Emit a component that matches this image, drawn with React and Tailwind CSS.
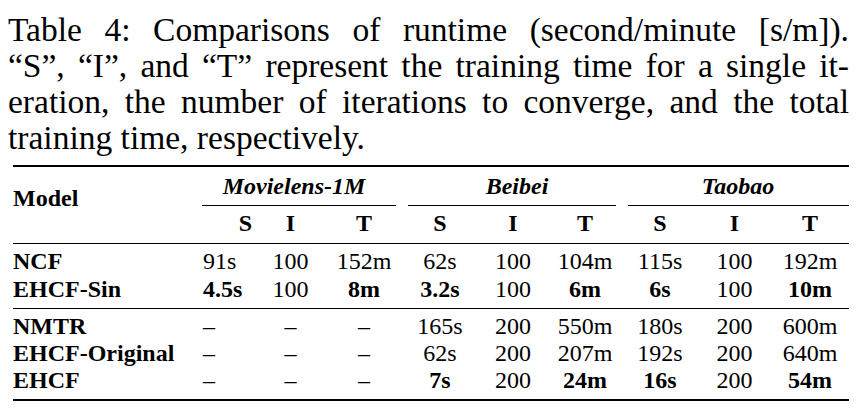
import React from 'react';

const cols = 'grid grid-cols-[69px_71px_76px_76px_70px_74px_76px_73px_78px]';

const groupOne = [
  { model: 'NCF', cells: [['91s'], ['100'], ['152m'], ['62s'], ['100'], ['104m'], ['115s'], ['100'], ['192m']] },
  { model: 'EHCF-Sin', cells: [['4.5s', 1], ['100'], ['8m', 1], ['3.2s', 1], ['100'], ['6m', 1], ['6s', 1], ['100'], ['10m', 1]] },
];

const groupTwo = [
  { model: 'NMTR', cells: [['–'], ['–'], ['–'], ['165s'], ['200'], ['550m'], ['180s'], ['200'], ['600m']] },
  { model: 'EHCF-Original', cells: [['–'], ['–'], ['–'], ['62s'], ['200'], ['207m'], ['192s'], ['200'], ['640m']] },
  { model: 'EHCF', cells: [['–'], ['–'], ['–'], ['7s', 1], ['200'], ['24m', 1], ['16s', 1], ['200'], ['54m', 1]] },
];

function Row({ row, height }) {
  return (
    <div className={`flex ${height}`}>
      <div className="w-[173px] font-bold">{row.model}</div>
      <div className={cols}>
        {row.cells.map(([v, b], i) => (
          <div
            key={i}
            className={`${i === 0 ? 'text-left pl-[17px]' : 'text-center'} ${b ? 'font-bold' : ''}`}
          >
            {v}
          </div>
        ))}
      </div>
    </div>
  );
}

export default function App() {
  return (
    <div className="w-[862px] h-[408px] bg-white text-black font-['Liberation_Serif','Times_New_Roman',serif] overflow-hidden">
      {/* Caption */}
      <div className="pl-[8px] pr-[13px] pt-[12px] text-[33.5px] leading-[36px]">
        <div className="text-justify [text-align-last:justify]">
          Table 4: Comparisons of runtime (second/minute [s/m]).
        </div>
        <div className="text-justify [text-align-last:justify]">
          “S”, “I”, and “T” represent the training time for a single it-
        </div>
        <div className="text-justify [text-align-last:justify]">
          eration, the number of iterations to converge, and the total
        </div>
        <div>training time, respectively.</div>
      </div>

      {/* Table */}
      <div className="ml-[13px] w-[836px] mt-[9px] text-[24px]">
        <div className="flex border-t-2 border-b border-black">
          <div className="w-[173px] pt-[18px] font-bold leading-[27px]">Model</div>
          <div className="pt-[6px] pb-[6px]">
            <div className="grid grid-cols-[216px_220px_227px] font-bold italic leading-[27px]">
              <div>
                <div className="text-center">Movielens-1M</div>
                <div className="mt-[5px] h-px bg-black ml-[16px] mr-[6px]" />
              </div>
              <div>
                <div className="text-center pl-[10px]">Beibei</div>
                <div className="mt-[5px] h-px bg-black mx-[6px]" />
              </div>
              <div>
                <div className="text-center pl-[5px]">Taobao</div>
                <div className="mt-[5px] h-px bg-black ml-[6px]" />
              </div>
            </div>
            <div className={`${cols} mt-[4px] font-bold leading-[27px]`}>
              <div className="text-right pr-[3px]">S</div>
              <div className="text-center">I</div>
              <div className="text-center">T</div>
              <div className="text-center">S</div>
              <div className="text-center">I</div>
              <div className="text-center">T</div>
              <div className="text-center">S</div>
              <div className="text-center">I</div>
              <div className="text-center">T</div>
            </div>
          </div>
        </div>

        <div className="pt-[3px] pb-[5px] border-b border-black leading-[28px]">
          {groupOne.map((r) => (
            <Row key={r.model} row={r} height="h-[28px]" />
          ))}
        </div>

        <div className="pt-[4px] pb-[5px] border-b-2 border-black leading-[27px]">
          {groupTwo.map((r) => (
            <Row key={r.model} row={r} height="h-[27px]" />
          ))}
        </div>
      </div>
    </div>
  );
}
